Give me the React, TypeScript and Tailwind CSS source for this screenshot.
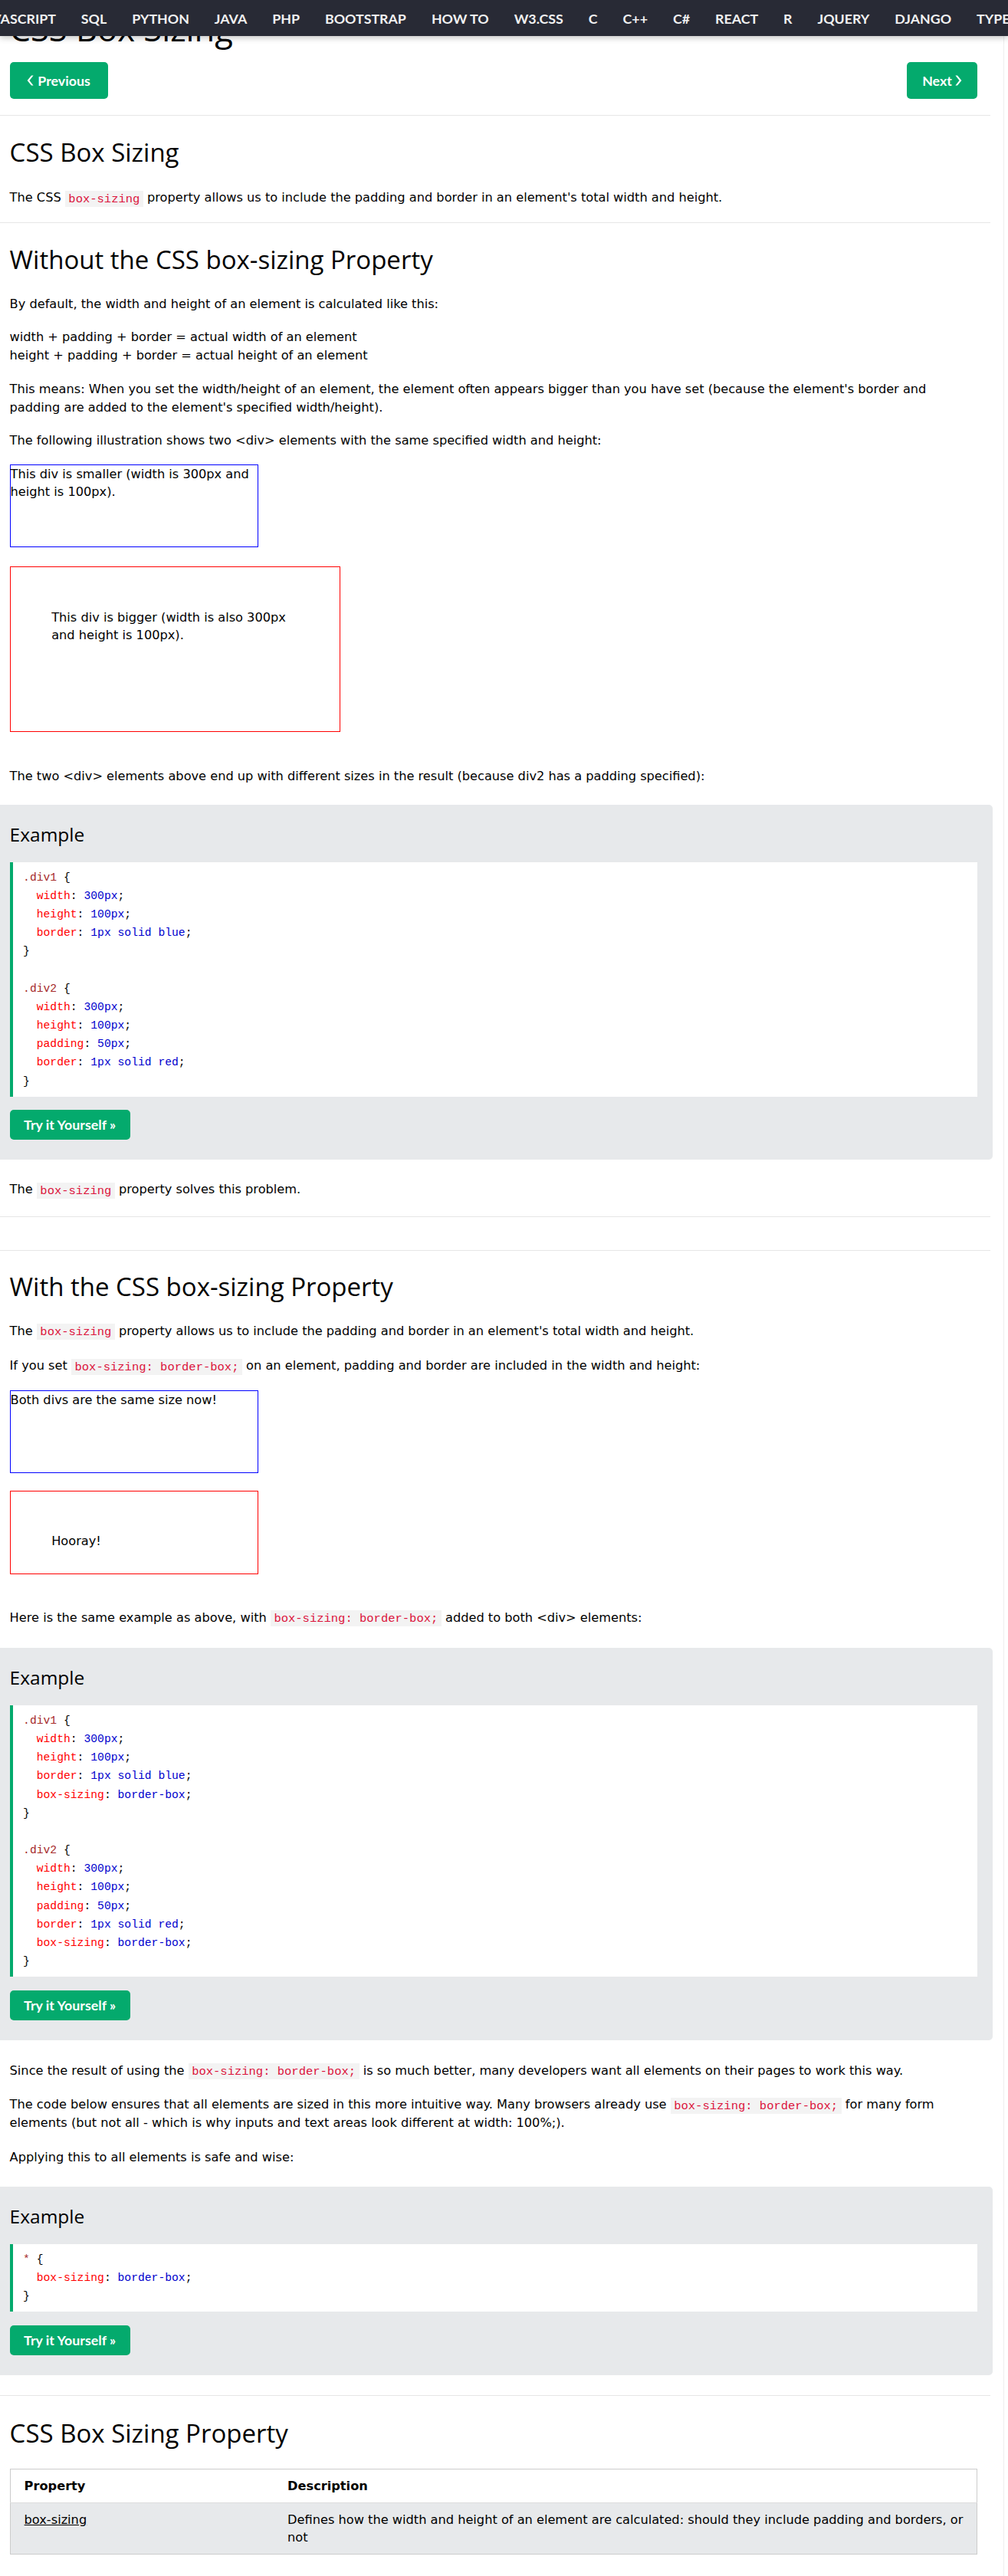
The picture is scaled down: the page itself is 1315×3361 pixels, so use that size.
import React from 'react'

const NAV = ['JAVASCRIPT', 'SQL', 'PYTHON', 'JAVA', 'PHP', 'BOOTSTRAP', 'HOW TO', 'W3.CSS', 'C', 'C++', 'C#', 'REACT', 'R', 'JQUERY', 'DJANGO', 'TYPESCRIPT', 'ANGULAR']

type Tok = [string, string]

const TOK_COLOR: Record<string, string> = {
  s: 'text-[#a52a2a]',
  p: 'text-[#ff0000]',
  v: 'text-[#0000cd]',
  '': 'text-black',
}

const decl = (prop: string, val: string): Tok[] => [
  ['  ' + prop, 'p'],
  [': ', ''],
  [val, 'v'],
  [';', ''],
]

const CODE_1: Tok[][] = [
  [['.div1', 's'], [' {', '']],
  decl('width', '300px'),
  decl('height', '100px'),
  decl('border', '1px solid blue'),
  [['}', '']],
  [],
  [['.div2', 's'], [' {', '']],
  decl('width', '300px'),
  decl('height', '100px'),
  decl('padding', '50px'),
  decl('border', '1px solid red'),
  [['}', '']],
]

const CODE_2: Tok[][] = [
  [['.div1', 's'], [' {', '']],
  decl('width', '300px'),
  decl('height', '100px'),
  decl('border', '1px solid blue'),
  decl('box-sizing', 'border-box'),
  [['}', '']],
  [],
  [['.div2', 's'], [' {', '']],
  decl('width', '300px'),
  decl('height', '100px'),
  decl('padding', '50px'),
  decl('border', '1px solid red'),
  decl('box-sizing', 'border-box'),
  [['}', '']],
]

const CODE_3: Tok[][] = [
  [['*', 's'], [' {', '']],
  decl('box-sizing', 'border-box'),
  [['}', '']],
]

// inline code keeps a short line-height so it never makes the line taller
function C({ children }: { children: React.ReactNode }) {
  return (
    <code className="font-['Liberation_Mono',monospace] text-[15.5px] leading-none text-[#dc143c] bg-[#f3f3f3] px-[4.5px] py-[1.5px]">
      {children}
    </code>
  )
}

function Chevron({ dir }: { dir: 'left' | 'right' }) {
  return (
    <svg width="9" height="14" viewBox="0 0 9 14" fill="white">
      {dir === 'left' ? (
        <path d="M8.6 0.6 L3.4 7 L8.6 13.4 L6 13.4 L0.6 7 L6 0.6 Z" />
      ) : (
        <path d="M0.4 0.6 L5.6 7 L0.4 13.4 L3 13.4 L8.4 7 L3 0.6 Z" />
      )}
    </svg>
  )
}

function GreenButton({ className, children }: { className: string; children: React.ReactNode }) {
  return (
    <div
      className={
        'flex items-center justify-center bg-[#04aa6d] text-white rounded-[5px] font-["Lato",sans-serif] font-bold text-[17.8px] ' +
        className
      }
    >
      {children}
    </div>
  )
}

function Hr({ className }: { className: string }) {
  return <div className={'h-px bg-[#e6e6e6] -ml-[12.6px] -mr-[17px] ' + className} />
}

function Example({ lines, className }: { lines: Tok[][]; className: string }) {
  return (
    <div className={'-ml-[12.6px] -mr-[20px] pl-[12.6px] pr-[20px] pt-[24.5px] pb-[26px] bg-[#e7e9eb] rounded-r-[5px] ' + className}>
      <h3 className="font-['Open_Sans',sans-serif] font-normal text-[24.5px] leading-[30px] text-black">Example</h3>
      <div className="mt-[20.5px] bg-white border-l-[4px] border-[#04aa6d] pl-[13.5px] py-[8px] font-['Liberation_Mono',monospace] text-[14.7px] leading-[24.2px]">
        {lines.map((line, i) => (
          <div key={i} className="whitespace-pre h-[24.2px]">
            {line.map(([t, k], j) => (
              <span key={j} className={TOK_COLOR[k]}>
                {t}
              </span>
            ))}
          </div>
        ))}
      </div>
      <GreenButton className="mt-[17.5px] w-[157px] h-[39px]">Try it Yourself »</GreenButton>
    </div>
  )
}

function P({ className = '', children }: { className?: string; children: React.ReactNode }) {
  return <p className={'leading-[23.4px] ' + className}>{children}</p>
}

const H2 = 'font-[\'Open_Sans\',sans-serif] font-normal text-[33px] leading-[40px] text-black'

export default function App() {
  return (
    <div className="relative w-[1315px] min-h-[3361px] bg-white overflow-hidden flex">
      {/* top nav, scrolled over the page */}
      <div className="absolute top-0 left-0 right-0 h-[47px] bg-[#282a35] z-10 overflow-hidden shadow-[0_2px_8px_rgba(0,0,0,0.25)]">
        <div className="flex -ml-[46px] pt-[1.3px] whitespace-nowrap">
          {NAV.map((n) => (
            <span key={n} className="px-[16.5px] leading-[47px] font-['Lato',sans-serif] font-bold text-[17.8px] text-[#f1f1f1]">
              {n}
            </span>
          ))}
        </div>
      </div>

      <div className="w-[1309px] shrink-0 flex flex-col pl-[12.6px] pr-[34px] font-['DejaVu_Sans',sans-serif] text-[16.2px] text-black pb-[33px]">
        <h1 className="mt-[10.5px] font-['Open_Sans',sans-serif] font-normal text-[43.5px] leading-[54px] text-black">CSS Box Sizing</h1>

        <div className="mt-[16.5px] flex justify-between">
          <GreenButton className="w-[128px] h-[48px] gap-[5px]">
            <Chevron dir="left" />
            <span>Previous</span>
          </GreenButton>
          <GreenButton className="w-[92px] h-[48px] gap-[4px]">
            <span>Next</span>
            <Chevron dir="right" />
          </GreenButton>
        </div>

        <Hr className="mt-[21px]" />

        <h2 className={H2 + ' mt-[28px]'}>CSS Box Sizing</h2>
        <P className="mt-[27px]">
          The CSS <C>box-sizing</C> property allows us to include the padding and border in an element's total width and height.
        </P>

        <Hr className="mt-[21px]" />

        <h2 className={H2 + ' mt-[27.5px]'}>Without the CSS box-sizing Property</h2>
        <P className="mt-[26px]">By default, the width and height of an element is calculated like this:</P>
        <P className="mt-[20px]">
          width + padding + border = actual width of an element
          <br />
          height + padding + border = actual height of an element
        </P>
        <P className="mt-[21px]">
          This means: When you set the width/height of an element, the element often appears bigger than you have set (because the element's border and padding are added to the element's specified width/height).
        </P>
        <P className="mt-[20.5px]">The following illustration shows two &lt;div&gt; elements with the same specified width and height:</P>

        <div className="mt-[19.2px] w-[324px] h-[108px] border border-[#0000ff] leading-[23.4px]">
          This div is smaller (width is 300px and height is 100px).
        </div>
        <div className="mt-[25.3px] w-[431px] h-[215.5px] border border-[#ff0000] p-[53.6px] leading-[23.4px]">
          This div is bigger (width is also 300px and height is 100px).
        </div>

        <P className="mt-[46.5px]">The two &lt;div&gt; elements above end up with different sizes in the result (because div2 has a padding specified):</P>

        <Example lines={CODE_1} className="mt-[24.8px]" />

        <P className="mt-[27px]">
          The <C>box-sizing</C> property solves this problem.
        </P>

        <Hr className="mt-[23px]" />
        <Hr className="mt-[43px]" />

        <h2 className={H2 + ' mt-[27.2px]'}>With the CSS box-sizing Property</h2>
        <P className="mt-[26px]">
          The <C>box-sizing</C> property allows us to include the padding and border in an element's total width and height.
        </P>
        <P className="mt-[21.8px]">
          If you set <C>box-sizing: border-box;</C> on an element, padding and border are included in the width and height:
        </P>

        <div className="mt-[20.6px] w-[324px] h-[107.5px] border border-[#0000ff] leading-[23.4px]">Both divs are the same size now!</div>
        <div className="mt-[23px] w-[324px] h-[107.5px] border border-[#ff0000] p-[53.6px] leading-[23.4px]">Hooray!</div>

        <P className="mt-[45.2px]">
          Here is the same example as above, with <C>box-sizing: border-box;</C> added to both &lt;div&gt; elements:
        </P>

        <Example lines={CODE_2} className="mt-[27.4px]" />

        <P className="mt-[28px]">
          Since the result of using the <C>box-sizing: border-box;</C> is so much better, many developers want all elements on their pages to work this way.
        </P>
        <P className="mt-[21px]">
          The code below ensures that all elements are sized in this more intuitive way. Many browsers already use <C>box-sizing: border-box;</C> for many form elements (but not all - which is why inputs and text areas look different at width: 100%;).
        </P>
        <P className="mt-[21.5px]">Applying this to all elements is safe and wise:</P>

        <Example lines={CODE_3} className="mt-[26.5px]" />

        <Hr className="mt-[26.5px]" />

        <h2 className={H2 + ' mt-[29px]'}>CSS Box Sizing Property</h2>

        <table className="mt-[26px] w-full table-fixed border-collapse border border-[#cccccc] leading-[23.4px]">
          <colgroup>
            <col className="w-[353px]" />
            <col />
          </colgroup>
          <thead>
            <tr className="bg-white border-b border-[#dddddd]">
              <th className="text-left font-bold pl-[18px] pr-[9px] py-[9.8px]">Property</th>
              <th className="text-left font-bold px-[9px] py-[9.8px]">Description</th>
            </tr>
          </thead>
          <tbody>
            <tr className="bg-[#e7e9eb]">
              <td className="align-top pl-[18px] pr-[9px] py-[9.6px]">
                <span className="underline">box-sizing</span>
              </td>
              <td className="align-top px-[9px] py-[9.6px]">
                Defines how the width and height of an element are calculated: should they include padding and borders, or not
              </td>
            </tr>
          </tbody>
        </table>
      </div>

      <div className="w-px shrink-0 bg-[#efefef]" />
      <div className="flex-1" />
    </div>
  )
}
